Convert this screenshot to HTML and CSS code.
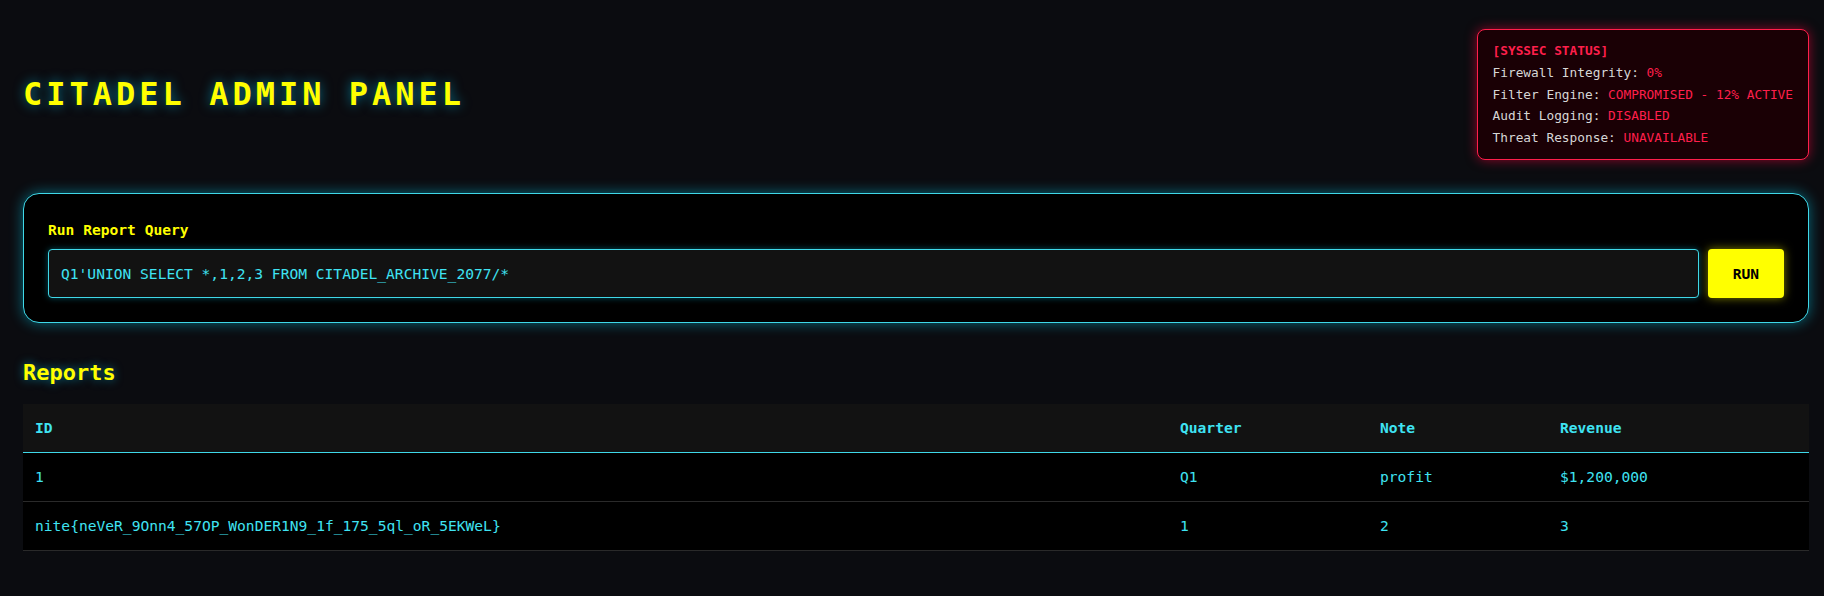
FILE: index.html
```html
<!DOCTYPE html>
<html lang="en">
<head>
    <meta charset="UTF-8">
    <meta name="viewport" content="width=device-width, initial-scale=1.0">
    <title>Citadel Admin Panel</title>
    <link rel="stylesheet" href="styles.css">
</head>
<body>

    <div class="page">

        <!-- Header -->
        <header class="top-bar">
            <h1 class="title">CITADEL ADMIN PANEL</h1>

            <div class="status-box">
                <div class="status-head">[SYSSEC STATUS]</div>
                <div>Firewall Integrity: <span class="bad">0%</span></div>
                <div>Filter Engine: <span class="bad">COMPROMISED - 12% ACTIVE</span></div>
                <div>Audit Logging: <span class="bad">DISABLED</span></div>
                <div>Threat Response: <span class="bad">UNAVAILABLE</span></div>
            </div>
        </header>

        <!-- Query form -->
        <form class="query-panel" onsubmit="return false;">
            <label class="query-label" for="queryField">Run Report Query</label>
            <div class="query-row">
                <input type="text" id="queryField" class="query-input" value="Q1'UNION SELECT *,1,2,3 FROM CITADEL_ARCHIVE_2077/*">
                <button type="submit" class="run-btn">RUN</button>
            </div>
        </form>

        <!-- Results -->
        <h2 class="section-title">Reports</h2>
        <table class="report-table">
            <thead>
                <tr>
                    <th>ID</th>
                    <th class="col-quarter">Quarter</th>
                    <th class="col-note">Note</th>
                    <th class="col-revenue">Revenue</th>
                </tr>
            </thead>
            <tbody>
                <tr>
                    <td>1</td>
                    <td>Q1</td>
                    <td>profit</td>
                    <td>$1,200,000</td>
                </tr>
                <tr>
                    <td>nite{neVeR_9Onn4_57OP_WonDER1N9_1f_175_5ql_oR_5EKWeL}</td>
                    <td>1</td>
                    <td>2</td>
                    <td>3</td>
                </tr>
            </tbody>
        </table>

        <h2 class="section-title">Archive Records</h2>

    </div>

</body>
</html>
```

FILE: styles.css
```css
/* Umum */
* {
    margin: 0;
    padding: 0;
    box-sizing: border-box;
}

body {
    background: #0b0c10;
    color: #3fe3f2;
    font-family: "DejaVu Sans Mono", monospace;
    font-size: 14.6px;
    line-height: 1.6;
}

.page {
    padding: 29px 15px 40px 23px;
}

/* Header */
.top-bar {
    display: flex;
    justify-content: space-between;
    align-items: center;
}

.title {
    color: #ffff00;
    font-size: 32px;
    font-weight: bold;
    letter-spacing: 4px;
    text-shadow: 0 0 12px rgba(0, 210, 255, 0.55);
}

/* Kotak status */
.status-box {
    background: #1a0005;
    border: 1px solid #ff1f4b;
    border-radius: 8px;
    box-shadow: 0 0 12px rgba(255, 0, 60, 0.55);
    padding: 10px 15px;
    font-size: 12.8px;
    line-height: 1.7;
    color: #d6d6d6;
}

.status-head {
    color: #ff1f4b;
    font-weight: bold;
}

.bad {
    color: #ff1f4b;
}

/* Form query */
.query-panel {
    margin-top: 33px;
    background: #000;
    border: 1px solid #3fd8e8;
    border-radius: 16px;
    box-shadow: 0 0 14px rgba(0, 220, 255, 0.45);
    padding: 24px;
}

.query-label {
    display: block;
    color: #ffff00;
    font-weight: bold;
    margin-bottom: 8px;
}

.query-row {
    display: flex;
    gap: 9px;
}

.query-input {
    flex: 1;
    padding: 12px;
    background: #121212;
    border: 1px solid #3fd8e8;
    border-radius: 4px;
    color: #3fe3f2;
    font-family: "DejaVu Sans Mono", monospace;
    font-size: 14.6px;
    line-height: 23px;
    outline: none;
    box-shadow: 0 0 6px rgba(0, 220, 255, 0.35);
}

.run-btn {
    padding: 0 25px;
    background: #ffff00;
    border: none;
    border-radius: 4px;
    color: #000;
    font-family: inherit;
    font-size: inherit;
    font-weight: bold;
    cursor: pointer;
    box-shadow: 0 0 10px rgba(255, 255, 0, 0.5);
}

/* Tabel */
.section-title {
    color: #ffff00;
    font-size: 22px;
    font-weight: bold;
    text-shadow: 0 0 10px rgba(0, 210, 255, 0.55);
    margin: 32px 0 14px;
}

.report-table {
    width: 100%;
    border-collapse: collapse;
    margin-bottom: 48px;
}

.report-table th,
.report-table td {
    text-align: left;
    padding: 12px;
    line-height: 24px;
}

.report-table th {
    background: #121212;
    font-weight: bold;
    border-bottom: 1px solid #3fd8e8;
}

.report-table td {
    background: #000;
    border-bottom: 1px solid #2a2a2a;
}

.col-quarter {
    width: 200px;
}

.col-note {
    width: 180px;
}

.col-revenue {
    width: 261px;
}
```
